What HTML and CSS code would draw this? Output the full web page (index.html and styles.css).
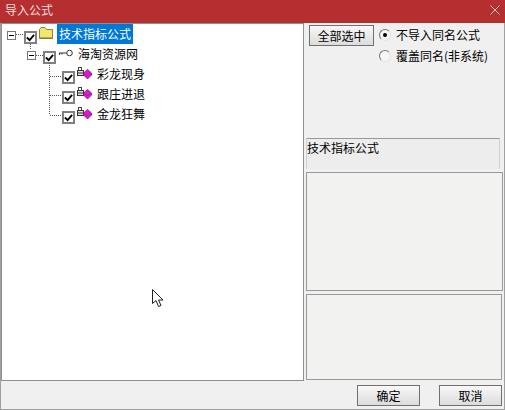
FILE: index.html
```html
<!DOCTYPE html>
<html lang="zh">
<head>
<meta charset="utf-8">
<title>导入公式</title>
<link rel="stylesheet" href="styles.css">
</head>
<body>
<div class="window">
  <header class="titlebar">
    <span class="title">导入公式</span>
    <svg class="close" width="10" height="10" viewBox="0 0 10 10"><path d="M.5 .5l9 9M9.500 .5l-9 9" stroke="#e9c5c5" stroke-width="1" fill="none"/></svg>
  </header>
  <main class="body">
    <section class="tree">
      <svg class="guides" width="100" height="130" viewBox="0 0 100 130">
        <path d="M16 34.500h8M30.500 44v6M36 55.500h7M49.500 63v52M50 76.500h12M50 95.500h12M50 115.500h12" stroke="#555" stroke-dasharray="1 1" fill="none"/>
      </svg>
      <div class="row lvl0">
        <span class="toggle"></span>
        <span class="check"><svg width="10" height="9" viewBox="0 0 10 9"><path d="M1 4.500l3 3 5-6" stroke="#000" stroke-width="2" fill="none"/></svg></span>
        <svg class="folder" width="16" height="14" viewBox="0 0 16 14"><path d="M1.500 12.500V3.500l1.500-2h4l1.500 2h6v9z" fill="#f2e76e" stroke="#8a8440"/><path d="M2 12h13" stroke="#7a7436"/></svg>
        <span class="label selected">技术指标公式</span>
      </div>
      <div class="row lvl1">
        <span class="toggle"></span>
        <span class="check"><svg width="10" height="9" viewBox="0 0 10 9"><path d="M1 4.500l3 3 5-6" stroke="#000" stroke-width="2" fill="none"/></svg></span>
        <svg class="key" width="16" height="8" viewBox="0 0 16 8"><circle cx="11.500" cy="4" r="2.800" fill="#fff" stroke="#333"/><path d="M8.500 4H1M1.500 4v2M4 4v1.500" stroke="#333" fill="none"/></svg>
        <span class="label">海淘资源网</span>
      </div>
      <div class="row lvl2">
        <span class="check"><svg width="10" height="9" viewBox="0 0 10 9"><path d="M1 4.500l3 3 5-6" stroke="#000" stroke-width="2" fill="none"/></svg></span>
        <svg class="gem" width="16" height="14" viewBox="0 0 16 14"><rect x="2.500" y="1.500" width="3" height="3" fill="none" stroke="#444"/><rect x="1.500" y="4.500" width="6" height="5" fill="#ddd" stroke="#333"/><path d="M2 7h5" stroke="#333"/><path d="M7.500 7l4-3.500 4 3.500v2l-4 4-4-4z" fill="#e815d8" stroke="#6e1a6c" stroke-width=".8"/><path d="M8 7.500l3.500 2 3.500-2" stroke="#8a1a88" stroke-width=".6" fill="none"/></svg>
        <span class="label">彩龙现身</span>
      </div>
      <div class="row lvl2">
        <span class="check"><svg width="10" height="9" viewBox="0 0 10 9"><path d="M1 4.500l3 3 5-6" stroke="#000" stroke-width="2" fill="none"/></svg></span>
        <svg class="gem" width="16" height="14" viewBox="0 0 16 14"><rect x="2.500" y="1.500" width="3" height="3" fill="none" stroke="#444"/><rect x="1.500" y="4.500" width="6" height="5" fill="#ddd" stroke="#333"/><path d="M2 7h5" stroke="#333"/><path d="M7.500 7l4-3.500 4 3.500v2l-4 4-4-4z" fill="#e815d8" stroke="#6e1a6c" stroke-width=".8"/><path d="M8 7.500l3.500 2 3.500-2" stroke="#8a1a88" stroke-width=".6" fill="none"/></svg>
        <span class="label">跟庄进退</span>
      </div>
      <div class="row lvl2">
        <span class="check"><svg width="10" height="9" viewBox="0 0 10 9"><path d="M1 4.500l3 3 5-6" stroke="#000" stroke-width="2" fill="none"/></svg></span>
        <svg class="gem" width="16" height="14" viewBox="0 0 16 14"><rect x="2.500" y="1.500" width="3" height="3" fill="none" stroke="#444"/><rect x="1.500" y="4.500" width="6" height="5" fill="#ddd" stroke="#333"/><path d="M2 7h5" stroke="#333"/><path d="M7.500 7l4-3.500 4 3.500v2l-4 4-4-4z" fill="#e815d8" stroke="#6e1a6c" stroke-width=".8"/><path d="M8 7.500l3.500 2 3.500-2" stroke="#8a1a88" stroke-width=".6" fill="none"/></svg>
        <span class="label">金龙狂舞</span>
      </div>
      <svg class="cursor" width="14" height="20" viewBox="0 0 14 20"><path d="M1.500 1.500v14l3.500-3 2.500 6 2.500-1-2.500-5.500h4.500z" fill="#fff" stroke="#222"/></svg>
    </section>
    <aside class="side">
      <div class="options">
        <button class="btn select-all" type="button">全部选中</button>
        <div class="radios">
          <div class="radio-row"><span class="radio on"></span><span>不导入同名公式</span></div>
          <div class="radio-row"><span class="radio"></span><span>覆盖同名(非系统)</span></div>
        </div>
      </div>
      <div class="name-box">技术指标公式</div>
      <div class="panel mid"></div>
      <div class="panel low"></div>
    </aside>
  </main>
  <footer class="footer">
    <button class="btn action" type="button">确定</button>
    <button class="btn action" type="button">取消</button>
  </footer>
</div>
</body>
</html>
```
FILE: styles.css
```css
* { box-sizing: border-box; }
html, body { margin: 0; padding: 0; }
body {
  width: 505px;
  height: 410px;
  overflow: hidden;
  font-family: "Noto Sans CJK SC", "Liberation Sans", sans-serif;
  font-size: 12px;
  color: #000;
}
.window {
  width: 505px;
  height: 410px;
  display: flex;
  flex-direction: column;
  background: #f0f0f0;
  border-bottom: 1px solid #a0a0a0;
  border-left: 1px solid #a0a0a0;
  border-right: 1px solid #a0a0a0;
}
.titlebar {
  height: 23px;
  margin: 0 -1px;
  flex: none;
  display: flex;
  align-items: center;
  justify-content: space-between;
  padding: 0 5px 3px 5px;
  background: #b52f30;
  color: #f4dcdc;
  line-height: 18px;
}
.body {
  flex: none;
  height: 358px;
  display: flex;
}
.tree {
  position: relative;
  width: 303px;
  height: 358px;
  background: #fff;
  border: 1px solid #8f8f8f;
}
.guides { position: absolute; left: -2px; top: -24px; }
.cursor { position: absolute; left: 149px; top: 264px; }
.row {
  height: 20px;
  display: flex;
  align-items: flex-start;
  white-space: nowrap;
}
.lvl0 { padding-left: 5px; }
.lvl1 { padding-left: 25px; }
.lvl2 { padding-left: 60px; }
.toggle {
  width: 9px;
  height: 9px;
  margin-top: 7px;
  margin-right: 8px;
  border: 1px solid #777;
  background: linear-gradient(#000, #000) center / 5px 1px no-repeat #fff;
}
.lvl1 .toggle { margin-right: 7px; }
.check {
  width: 13px;
  height: 13px;
  margin-top: 7px;
  border: 2px solid #808080;
  background: #fff;
  display: flex;
  align-items: center;
  justify-content: center;
}
.check svg { display: block; }
.folder { margin-top: 2px; margin-left: 1px; }
.key { margin-top: 5px; margin-left: 2px; }
.gem { margin-top: 2px; margin-left: 1px; }
.lvl0 .label { margin-left: 3px; }
.lvl1 .label { margin-left: 4px; }
.lvl2 .label { margin-left: 5px; }
.label { line-height: 19px; font-size: 12px; }
.selected {
  background: #0078d7;
  color: #fff;
  padding: 0 2px;
  height: 20px;
  line-height: 20px;
}
.side {
  flex: 1;
  padding-left: 2px;
  display: flex;
  flex-direction: column;
}
.options {
  height: 115px;
  padding: 2px 0 0 3px;
  display: flex;
  align-items: flex-start;
  gap: 5px;
}
.btn {
  font: inherit;
  color: #000;
  border: 1px solid #707070;
  background: linear-gradient(#f8f8f8, #dcdcdc);
  padding: 0;
  line-height: 18px;
}
.select-all { width: 65px; height: 21px; }
.radios { display: flex; flex-direction: column; gap: 3px; padding-top: 1px; }
.radio-row { display: flex; align-items: center; gap: 5px; height: 18px; line-height: 18px; }
.radio {
  width: 12px;
  height: 12px;
  border-radius: 50%;
  background: #f6f6f6;
  border: 1px solid;
  border-color: #777 #e4e4e4 #e4e4e4 #777;
  position: relative;
}
.radio.on::after {
  content: "";
  position: absolute;
  left: 3px;
  top: 3px;
  width: 4px;
  height: 4px;
  border-radius: 50%;
  background: #000;
}
.name-box {
  width: 194px;
  height: 31px;
  border-top: 1px solid #999;
  border-left: 1px solid #d0d0d0;
  border-right: 1px solid #d0d0d0;
  background: #ededed;
  line-height: 18px;
  white-space: nowrap;
}
.panel {
  border: 1px solid #999;
  background: #f2f2f1;
  margin-top: 3px;
}
.mid { width: 197px; height: 119px; }
.low { width: 196px; height: 86px; }
.footer {
  flex: 1;
  display: flex;
  justify-content: flex-end;
  gap: 19px;
  padding: 4px 2px 0 0;
}
.action { width: 63px; height: 21px; }
```
